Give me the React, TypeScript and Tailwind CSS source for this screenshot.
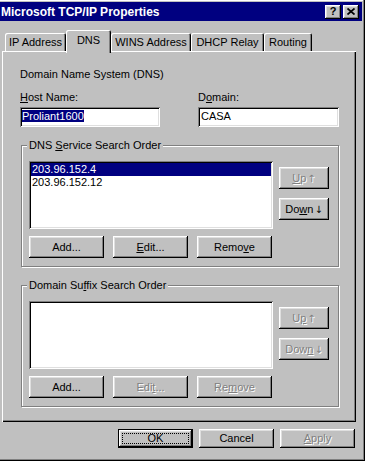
const bevel =
  "bg-[#c0c0c0] shadow-[inset_-1px_-1px_#000,inset_1px_1px_#fff,inset_-2px_-2px_#808080,inset_2px_2px_#dfdfdf]"
const sunken =
  "shadow-[inset_1px_1px_#808080,inset_-1px_-1px_#fff,inset_2px_2px_#000,inset_-2px_-2px_#dfdfdf]"
const dim = "text-[#808080] [text-shadow:1px_1px_0_#fff]"

function Acc({ text, at }: { text: string; at: number }) {
  return (
    <>
      {text.slice(0, at)}
      <u className="underline-offset-[1px]">{text[at]}</u>
      {text.slice(at + 1)}
    </>
  )
}

function Btn({
  children,
  w = "w-[75px]",
  h = "h-[22px]",
  disabled = false,
}: {
  children: React.ReactNode
  w?: string
  h?: string
  disabled?: boolean
}) {
  return (
    <div className={`${bevel} ${w} ${h} flex items-center justify-center leading-[13px] ${disabled ? dim : ""}`}>
      {children}
    </div>
  )
}

function Tab({ label, w, active = false }: { label: string; w: string; active?: boolean }) {
  return (
    <div
      className={`${w} rounded-t-[2px] bg-[#c0c0c0] flex justify-center leading-[13px] shadow-[inset_1px_1px_#fff,inset_-1px_0_#000,inset_-2px_0_#808080] ${
        active ? "h-[23px] -mb-[2px] relative z-10 pt-[4px]" : "h-[18px] pt-[3px]"
      }`}
    >
      {label}
    </div>
  )
}

function Group({
  label,
  items,
  selected,
  second = false,
}: {
  label: React.ReactNode
  items: string[]
  selected?: number
  second?: boolean
}) {
  return (
    <div className="relative ml-[1px] w-[318px] h-[122px] border border-[#808080] shadow-[1px_1px_0_#fff,inset_1px_1px_0_#fff] pl-[7px] pt-[15px]">
      <div className="absolute -top-[7px] left-[5px] px-[2px] bg-[#c0c0c0] leading-[13px]">{label}</div>
      <div className="flex">
        <div className={`w-[244px] h-[68px] bg-white ${sunken} p-[2px] flex flex-col`}>
          {items.map((it, i) => (
            <div
              key={it}
              className={`h-[13px] leading-[13px] pl-[1px] ${i === selected ? "bg-[#000080] text-white" : ""}`}
            >
              {it}
            </div>
          ))}
        </div>
        <div className="ml-[6px] pt-[6px] flex flex-col gap-[9px]">
          <Btn w="w-[50px]" disabled>
            {second ? <Acc text="Up" at={1} /> : <Acc text="Up" at={0} />}
            <span className="ml-[1px] font-['DejaVu_Sans',sans-serif] text-[10px]">↑</span>
          </Btn>
          <Btn w="w-[50px]" disabled={second}>
            {second ? <Acc text="Down" at={3} /> : <Acc text="Down" at={2} />}
            <span className="ml-[1px] font-['DejaVu_Sans',sans-serif] text-[10px]">↓</span>
          </Btn>
        </div>
      </div>
      <div className="flex gap-[9px] mt-[7px]">
        <Btn>Add...</Btn>
        <Btn disabled={second}>{second ? <Acc text="Edit..." at={3} /> : <Acc text="Edit..." at={0} />}</Btn>
        <Btn disabled={second}>{second ? <Acc text="Remove" at={2} /> : <Acc text="Remove" at={4} />}</Btn>
      </div>
    </div>
  )
}

export default function App() {
  return (
    <div className="w-[370px] h-[463px] bg-white overflow-hidden font-['Liberation_Sans',Arial,sans-serif] text-[11px] text-black">
      <div className="w-[365px] h-[461px] bg-[#c0c0c0] pt-[2px] pr-[3px] shadow-[inset_-1px_-1px_#000,inset_-2px_-2px_#808080,inset_0_1px_#fff] flex flex-col">
        {/* title bar */}
        <div className="h-[19px] bg-[#000080] flex items-center justify-between pl-[1px] pr-[3px]">
          <span className="text-white font-bold text-[12px] leading-[14px]">Microsoft TCP/IP Properties</span>
          <div className="flex gap-[2px]">
            <div className={`${bevel} w-[16px] h-[14px] flex items-center justify-center font-bold text-[11px] leading-[11px] pb-[1px]`}>
              ?
            </div>
            <div className={`${bevel} w-[16px] h-[14px] flex items-center justify-center pb-[1px]`}>
              <svg width="8" height="7" viewBox="0 0 8 7">
                <path d="M0.5 0.5 L7.5 6.5 M7.5 0.5 L0.5 6.5" stroke="#000" strokeWidth="1.7" fill="none" />
              </svg>
            </div>
          </div>
        </div>

        {/* tabs */}
        <div className="flex items-end h-[21px] mt-[9px] pl-[5px]">
          <Tab label="IP Address" w="w-[61px]" />
          <Tab label="DNS" w="w-[45px]" active />
          <Tab label="WINS Address" w="w-[80px]" />
          <Tab label="DHCP Relay" w="w-[73px]" />
          <Tab label="Routing" w="w-[48px]" />
        </div>

        {/* panel */}
        <div className="ml-[2px] w-[354px] h-[371px] bg-[#c0c0c0] shadow-[inset_1px_1px_#fff,inset_-1px_-1px_#000,inset_-2px_-2px_#808080] pl-[18px] pt-[17px] flex flex-col">
          <div className="leading-[13px]">Domain Name System (DNS)</div>
          <div className="flex mt-[10px]">
            <div className="w-[178px] flex flex-col">
              <div className="leading-[13px]">
                <Acc text="Host Name:" at={0} />
              </div>
              <div className={`mt-[3px] w-[140px] h-[20px] bg-white ${sunken} pl-[2px] pt-[3px] leading-[13px]`}>
                <span className="bg-[#000080] text-white">Proliant1600</span>
              </div>
            </div>
            <div className="flex flex-col">
              <div className="leading-[13px]">
                <Acc text="Domain:" at={1} />
              </div>
              <div className={`mt-[3px] w-[141px] h-[20px] bg-white ${sunken} pl-[3px] pt-[3px] leading-[13px]`}>
                CASA
              </div>
            </div>
          </div>

          <div className="mt-[18px]">
            <Group
              label={<Acc text="DNS Service Search Order" at={4} />}
              items={["203.96.152.4", "203.96.152.12"]}
              selected={0}
            />
          </div>
          <div className="mt-[18px]">
            <Group label={<Acc text="Domain Suffix Search Order" at={9} />} items={[]} second />
          </div>
        </div>

        {/* dialog buttons */}
        <div className="flex gap-[6px] mt-[7px] ml-[118px]">
          <div className="relative w-[75px] h-[19px] border border-black">
            <div className={`${bevel} w-full h-full flex items-center justify-center leading-[13px]`}>OK</div>
            <div className="absolute inset-[3px] border border-dotted border-black" />
          </div>
          <Btn h="h-[19px]">Cancel</Btn>
          <Btn h="h-[19px]" disabled>
            <Acc text="Apply" at={0} />
          </Btn>
        </div>
      </div>
    </div>
  )
}
